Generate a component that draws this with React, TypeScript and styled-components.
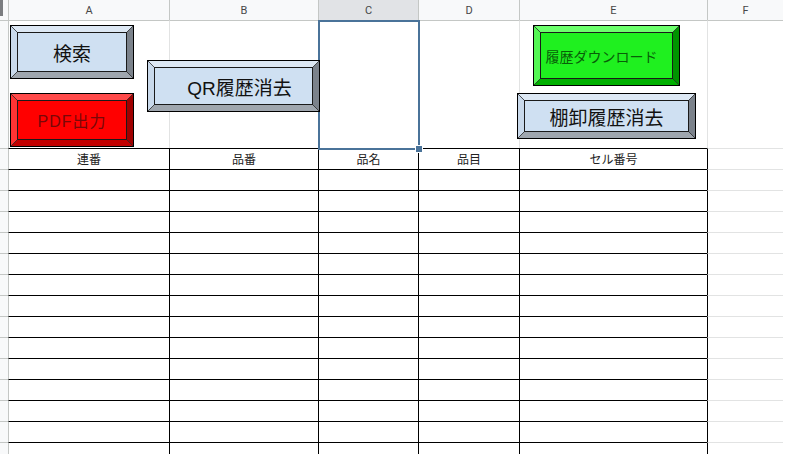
import styled, { createGlobalStyle } from "styled-components";

const GlobalStyle = createGlobalStyle`
  html, body {
    margin: 0;
    padding: 0;
    background: #ffffff;
  }
  body {
    width: 795px;
    height: 454px;
    overflow: hidden;
    font-family: "Liberation Sans", "Noto Sans CJK JP", sans-serif;
  }
`;

const COLUMNS = ["A", "B", "C", "D", "E", "F"];
const HEADERS = ["連番", "品番", "品名", "品目", "セル番号"];
const BODY_ROWS = 14;

const GRID_LINE = "#e2e3e3";
const HEAD_LINE = "#c4c7c5";
const INK = "#000000";
const SELECT = "#4a7399";

type Tone = "blue" | "red" | "green";

const tones: Record<
  Tone,
  { face: string; top: string; left: string; right: string; bottom: string; text: string }
> = {
  blue: {
    face: "#cfe0f2",
    top: "#dde8f4",
    left: "#c9d9eb",
    right: "#7b828b",
    bottom: "#9fa6ae",
    text: "#111111",
  },
  red: {
    face: "#ff0000",
    top: "#ff4a4a",
    left: "#ff3333",
    right: "#a00000",
    bottom: "#c20000",
    text: "#780808",
  },
  green: {
    face: "#1ff01f",
    top: "#6cff6c",
    left: "#55f755",
    right: "#009400",
    bottom: "#00b000",
    text: "#085e08",
  },
};

const BUTTONS: {
  label: string;
  tone: Tone;
  x: number;
  y: number;
  w: number;
  h: number;
  size: number;
  spacing?: number;
  shift?: number;
}[] = [
  { label: "検索", tone: "blue", x: 10, y: 25, w: 124, h: 54, size: 19 },
  { label: "PDF出力", tone: "red", x: 10, y: 93, w: 124, h: 54, size: 16, spacing: 1 },
  { label: "QR履歴消去", tone: "blue", x: 147, y: 60, w: 173, h: 52, size: 19, shift: 6 },
  { label: "履歴ダウンロード", tone: "green", x: 533, y: 25, w: 147, h: 61, size: 14, shift: -5 },
  { label: "棚卸履歴消去", tone: "blue", x: 517, y: 93, w: 179, h: 46, size: 19 },
];

const BEVEL = 6;

export default function App() {
  return (
    <>
      <GlobalStyle />
      <Sheet>
        <Grid>
          <Corner>
            <CornerMark />
          </Corner>
          {COLUMNS.map((c) => (
            <ColHeader key={c} $selected={c === "C"}>
              {c}
            </ColHeader>
          ))}
          <Blank />

          <RowHeader />
          {COLUMNS.map((c, i) => (
            <Cell
              key={c}
              $top={HEAD_LINE}
              $left={i === 0 ? HEAD_LINE : GRID_LINE}
            >
              {c === "C" && (
                <Selection>
                  <Handle />
                </Selection>
              )}
            </Cell>
          ))}
          <Blank />

          <RowHeader />
          {HEADERS.map((h, i) => (
            <HeadCell key={h} $top={INK} $left={i === 0 ? HEAD_LINE : INK}>
              {h}
            </HeadCell>
          ))}
          <Cell $top={GRID_LINE} $left={INK} />
          <Blank />

          {Array.from({ length: BODY_ROWS }).map((_, r) => (
            <Row key={r}>
              <RowHeader />
              {HEADERS.map((h, i) => (
                <Cell key={h} $top={INK} $left={i === 0 ? HEAD_LINE : INK} />
              ))}
              <Cell $top={GRID_LINE} $left={INK} />
              <Blank />
            </Row>
          ))}
        </Grid>

        {BUTTONS.map((b) => (
          <Bevel
            key={b.label}
            $tone={b.tone}
            $x={b.x + 1}
            $y={b.y + 1}
            $w={b.w - 2}
            $h={b.h - 2}
          >
            <Corners
              width={b.w - 2}
              height={b.h - 2}
              viewBox={`0 0 ${b.w - 2} ${b.h - 2}`}
            >
              <line x1={0} y1={0} x2={BEVEL} y2={BEVEL} />
              <line x1={b.w - 2} y1={0} x2={b.w - 2 - BEVEL} y2={BEVEL} />
              <line x1={0} y1={b.h - 2} x2={BEVEL} y2={b.h - 2 - BEVEL} />
              <line
                x1={b.w - 2}
                y1={b.h - 2}
                x2={b.w - 2 - BEVEL}
                y2={b.h - 2 - BEVEL}
              />
            </Corners>
            <Face
              $tone={b.tone}
              $size={b.size}
              $spacing={b.spacing ?? 0}
              $shift={b.shift ?? 0}
            >
              {b.label}
            </Face>
          </Bevel>
        ))}
      </Sheet>
    </>
  );
}

const Sheet = styled.div`
  position: relative;
  width: 795px;
  height: 454px;
  overflow: hidden;
  background: #ffffff;
`;

const Grid = styled.div`
  display: grid;
  grid-template-columns: 8px 161px 149px 100px 101px 188px 76px 12px;
  grid-template-rows: 20px 128px 21px repeat(${BODY_ROWS}, 21px);
`;

const Row = styled.div`
  display: contents;
`;

const Corner = styled.div`
  background: #f8f9fa;
  display: flex;
  align-items: flex-start;
`;

const CornerMark = styled.div`
  width: 3px;
  height: 16px;
  background: #7b7d80;
`;

const ColHeader = styled.div<{ $selected?: boolean }>`
  box-sizing: border-box;
  border-left: 1px solid ${HEAD_LINE};
  background: ${(p) => (p.$selected ? "#e1e3e6" : "#f8f9fa")};
  color: #474747;
  font-family: Roboto, "Liberation Sans", sans-serif;
  font-size: 11px;
  display: flex;
  align-items: center;
  justify-content: center;
`;

const Blank = styled.div`
  background: #ffffff;
`;

const RowHeader = styled.div`
  box-sizing: border-box;
  border-top: 1px solid ${HEAD_LINE};
  background: #f8f9fa;
`;

const Cell = styled.div<{ $top: string; $left: string }>`
  position: relative;
  box-sizing: border-box;
  border-top: 1px solid ${(p) => p.$top};
  border-left: 1px solid ${(p) => p.$left};
  background: #ffffff;
`;

const HeadCell = styled(Cell)`
  display: flex;
  justify-content: center;
  align-items: flex-start;
  padding-top: 2px;
  font-family: "Noto Sans CJK JP", sans-serif;
  font-size: 12px;
  line-height: 15px;
  color: #222222;
`;

const Selection = styled.div`
  position: absolute;
  left: -1px;
  top: -1px;
  right: -2px;
  bottom: -2px;
  border: 2px solid ${SELECT};
  z-index: 2;
`;

const Handle = styled.div`
  position: absolute;
  right: -5px;
  bottom: -5px;
  width: 6px;
  height: 6px;
  background: ${SELECT};
  border: 1px solid #ffffff;
`;

const Bevel = styled.div<{ $tone: Tone; $x: number; $y: number; $w: number; $h: number }>`
  position: absolute;
  left: ${(p) => p.$x}px;
  top: ${(p) => p.$y}px;
  width: ${(p) => p.$w}px;
  height: ${(p) => p.$h}px;
  box-sizing: border-box;
  display: flex;
  border-style: solid;
  border-width: ${BEVEL}px;
  border-color: ${(p) =>
    `${tones[p.$tone].top} ${tones[p.$tone].right} ${tones[p.$tone].bottom} ${tones[p.$tone].left}`};
  box-shadow: 0 0 0 1px #000000;
  z-index: 3;
`;

const Corners = styled.svg`
  position: absolute;
  left: -${BEVEL}px;
  top: -${BEVEL}px;
  pointer-events: none;

  line {
    stroke: #2a2a2a;
    stroke-width: 0.8;
  }
`;

const Face = styled.div<{ $tone: Tone; $size: number; $spacing: number; $shift: number }>`
  flex: 1;
  box-sizing: border-box;
  border: 1px solid #1a1a1a;
  background: ${(p) => tones[p.$tone].face};
  color: ${(p) => tones[p.$tone].text};
  font-family: "Liberation Sans", "Noto Sans CJK JP", sans-serif;
  font-size: ${(p) => p.$size}px;
  letter-spacing: ${(p) => p.$spacing}px;
  padding-left: ${(p) => Math.max(p.$shift, 0) * 2}px;
  padding-right: ${(p) => Math.max(-p.$shift, 0) * 2}px;
  display: flex;
  align-items: center;
  justify-content: center;
  white-space: nowrap;
`;
